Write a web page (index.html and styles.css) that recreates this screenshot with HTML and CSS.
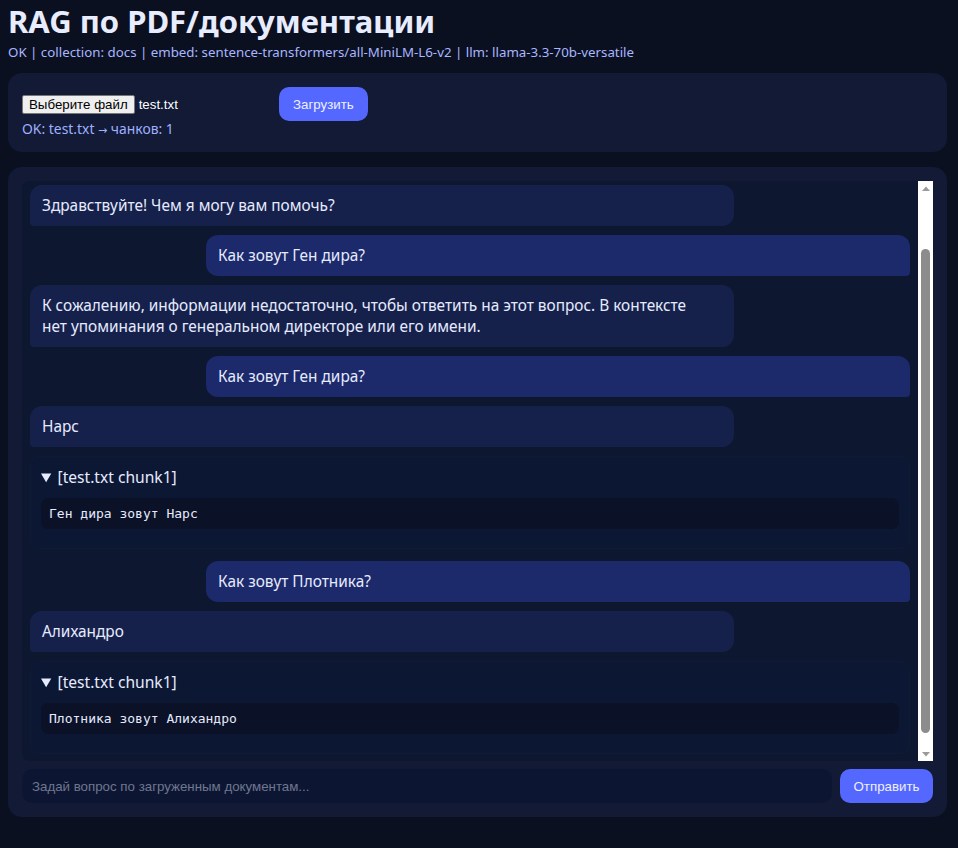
FILE: index.html
```html
<!DOCTYPE html>
<html lang="ru">
<head>
<meta charset="utf-8">
<title>RAG по PDF/документации</title>
<link rel="stylesheet" href="styles.css">
</head>
<body>
<div class="page">
  <h1 class="title">RAG по PDF/документации</h1>
  <div class="subtitle">OK | collection: docs | embed: sentence-transformers/all-MiniLM-L6-v2 | llm: llama-3.3-70b-versatile</div>

  <section class="card upload">
    <div class="upload-row">
      <label class="file">
        <span class="file-btn">Выберите файл</span>
        <span class="file-name">test.txt</span>
      </label>
      <button class="btn">Загрузить</button>
    </div>
    <div class="status">OK: test.txt <span class="arrow">→</span> чанков: 1</div>
  </section>

  <section class="card chat">
    <div class="chatbox">
      <div class="scroller">
        <div class="messages">
          <div class="msg bot">Здравствуйте! Чем я могу вам помочь?</div>
          <div class="msg user">Как зовут Ген дира?</div>
          <div class="msg bot">К сожалению, информации недостаточно, чтобы ответить на этот вопрос. В контексте<br>нет упоминания о генеральном директоре или его имени.</div>
          <div class="msg user">Как зовут Ген дира?</div>
          <div class="msg bot">Нарс</div>
          <details class="src" open>
            <summary>[test.txt chunk1]</summary>
            <pre>Ген дира зовут Нарс</pre>
          </details>
          <div class="msg user">Как зовут Плотника?</div>
          <div class="msg bot">Алихандро</div>
          <details class="src" open>
            <summary>[test.txt chunk1]</summary>
            <pre>Плотника зовут Алихандро</pre>
          </details>
        </div>
      </div>
      <div class="sb" aria-hidden="true">
        <div class="sb-btn"><svg width="8" height="5" viewBox="0 0 8 5"><polygon points="0,5 4,0.5 8,5" fill="#9a9a9a"/></svg></div>
        <div class="sb-track"><div class="sb-thumb"></div></div>
        <div class="sb-btn"><svg width="8" height="5" viewBox="0 0 8 5"><polygon points="0,0 8,0 4,4.5" fill="#9a9a9a"/></svg></div>
      </div>
    </div>
    <div class="ask-row">
      <input class="ask" type="text" placeholder="Задай вопрос по загруженным документам...">
      <button class="btn send">Отправить</button>
    </div>
  </section>
</div>
</body>
</html>
```

FILE: styles.css
```css
* { box-sizing: border-box; }
html, body { margin: 0; background: #0b1020; }
body {
  font-family: "Noto Sans", "DejaVu Sans", sans-serif;
  color: #e6ebff;
  height: 848px;
  overflow: hidden;
}
.page { padding: 0 11px 8px 8px; }
.title {
  margin: 0;
  padding-top: 2px;
  font-size: 31px;
  line-height: 38px;
  font-weight: 700;
  color: #e8ecff;
}
.subtitle {
  font-size: 13.3px;
  line-height: 18px;
  color: #a8b6ff;
  margin-top: 3px;
}
.card {
  background: #121a35;
  border-radius: 14px;
  padding: 14px;
}
.upload { margin-top: 12px; }
.upload-row {
  display: flex;
  align-items: center;
  gap: 8px;
}
.file {
  width: 249px;
  display: flex;
  align-items: center;
  gap: 4px;
  font-family: "Liberation Sans", Arial, sans-serif;
  font-size: 13.3px;
  color: #ffffff;
}
.file-btn {
  display: inline-block;
  height: 19px;
  line-height: 17px;
  padding: 0 6px;
  background: #efefef;
  color: #000000;
  border: 1px solid #767676;
  border-radius: 2px;
}
.btn {
  font-family: "Liberation Sans", Arial, sans-serif;
  font-size: 13.3px;
  background: #5468ff;
  color: #eef0ff;
  border: 0;
  border-radius: 10px;
  height: 34px;
  padding: 0 14px;
}
.status {
  margin-top: 1px;
  font-size: 13.9px;
  line-height: 14px;
  color: #9fb0ff;
}
.status .arrow { font-family: "DejaVu Sans", sans-serif; font-size: 11px; }
.chat { margin-top: 15px; }
.chatbox {
  height: 580px;
  display: flex;
}
.scroller {
  flex: 1;
  min-width: 0;
  background: #0e1730;
  border-radius: 8px 0 0 8px;
  overflow: hidden;
  display: flex;
  flex-direction: column-reverse;
}
.sb {
  width: 15px;
  flex: none;
  background: #ffffff;
  display: flex;
  flex-direction: column;
}
.sb-btn {
  height: 14px;
  display: flex;
  align-items: center;
  justify-content: center;
}
.sb-track {
  flex: 1;
  padding: 54px 3px 14px;
  display: flex;
}
.sb-thumb {
  flex: 1;
  background: #8c8c8c;
  border-radius: 5px;
}
.messages {
  display: flex;
  flex-direction: column;
  gap: 9px;
  padding: 8px 8px 7px;
}
.msg {
  width: 80%;
  padding: 10px 12px;
  border-radius: 12px;
  font-size: 15.4px;
  line-height: 21px;
  color: #e6ebff;
}
.msg.bot {
  background: #16214b;
  align-self: flex-start;
  border-bottom-left-radius: 4px;
}
.msg.user {
  background: #1c296a;
  align-self: flex-end;
  border-bottom-right-radius: 4px;
}
.src {
  background: #0c1733;
  border: 1px solid rgba(255,255,255,0.015);
  border-radius: 10px;
  padding: 9px 10px 10px;
  margin-bottom: 3px;
}
.src:last-child { margin-bottom: 0; }
.src summary {
  font-size: 15.6px;
  line-height: 22px;
  color: #e6ebff;
  cursor: pointer;
}
.src pre {
  margin: 10px 0 9px;
  background: #0b1126;
  border-radius: 8px;
  padding: 8px;
  font-family: "DejaVu Sans Mono", "Liberation Mono", monospace;
  font-size: 13px;
  line-height: 15px;
  color: #e6ebff;
}
.ask-row {
  display: flex;
  gap: 8px;
  margin-top: 8px;
}
.ask {
  flex: 1;
  height: 34px;
  background: #0c1632;
  border: 0;
  border-radius: 10px;
  padding: 0 10px;
  font-family: "Liberation Sans", Arial, sans-serif;
  font-size: 13.3px;
  color: #e6ebff;
  outline: none;
}
.ask::placeholder { color: #6f7690; }
.send { width: 93px; padding: 0; }
```
